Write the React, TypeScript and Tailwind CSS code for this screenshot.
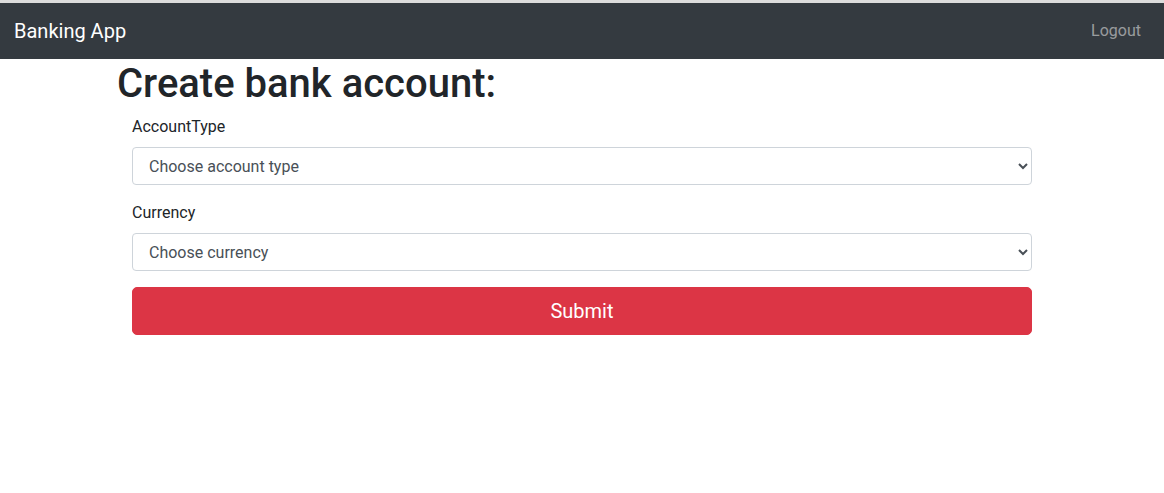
import React from "react";

const App: React.FC = () => {
  return (
    <div className="min-h-[493px] bg-white font-['Roboto',_'Liberation_Sans',_sans-serif] text-[#212529]">
      <div className="h-[3px] bg-[#dcdcdc]" />
      <nav className="flex h-14 items-center justify-between bg-[#343a40] pl-[14px] pr-[15px]">
        <a className="py-[5px] text-xl leading-[30px] text-white">Banking App</a>
        <a className="p-2 text-base leading-6 text-white/50">Logout</a>
      </nav>

      <div className="mx-auto w-[960px] px-[15px]">
        <h1 className="mb-2 pt-px text-[40px] font-medium leading-[48px]">
          Create bank account:
        </h1>

        <form className="-mt-px px-[15px]">
          <div className="mb-4">
            <label className="mb-2 block text-base leading-6">AccountType</label>
            <select className="block h-[38px] w-full rounded border border-[#ced4da] bg-white px-3 text-base text-[#495057]">
              <option>Choose account type</option>
            </select>
          </div>

          <div className="mb-4">
            <label className="mb-2 block text-base leading-6">Currency</label>
            <select className="block h-[38px] w-full rounded border border-[#ced4da] bg-white px-3 text-base text-[#495057]">
              <option>Choose currency</option>
            </select>
          </div>

          <button
            type="button"
            className="block h-12 w-full rounded-[5px] border border-[#dc3545] bg-[#dc3545] text-xl leading-[30px] text-white"
          >
            Submit
          </button>
        </form>
      </div>
    </div>
  );
};

export default App;
